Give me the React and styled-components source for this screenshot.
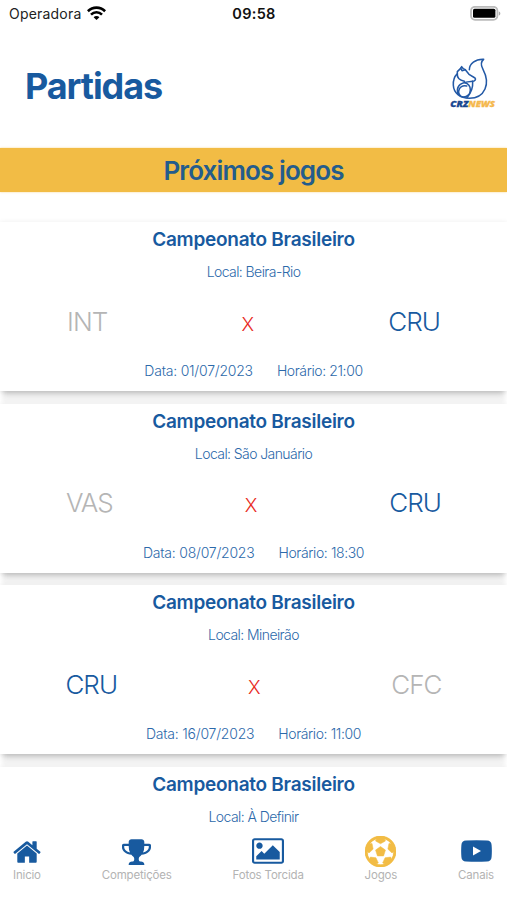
import styled, { createGlobalStyle } from "styled-components";

const blue = "#185a9f";
const gold = "#f2bc45";

const GlobalStyle = createGlobalStyle`
  * {
    box-sizing: border-box;
  }

  body {
    margin: 0;
    background: #fff;
    font-family: Inter, "Liberation Sans", sans-serif;
  }
`;

const Screen = styled.div`
  display: flex;
  flex-direction: column;
  height: 900px;
  overflow: hidden;
  background: #fff;
`;

const StatusBar = styled.div`
  display: grid;
  grid-template-columns: 1fr auto 1fr;
  align-items: center;
  height: 27px;
  padding: 0 5px 0 9px;
  color: #111;
`;

const Carrier = styled.div`
  display: flex;
  align-items: center;
  gap: 6px;
  font-size: 14px;
  letter-spacing: 0.2px;
  color: #222;
`;

const Clock = styled.span`
  margin-left: -3px;
  font-size: 14.5px;
  font-weight: 600;
  letter-spacing: 0.3px;
`;

const BatteryIcon = styled.svg`
  justify-self: end;
`;

const Header = styled.header`
  display: flex;
  justify-content: space-between;
  align-items: center;
  height: 121px;
  padding: 0 10px 3px 25px;
`;

const Title = styled.h1`
  margin: 0;
  font-size: 36px;
  line-height: 44px;
  font-weight: 700;
  letter-spacing: -1.1px;
  color: ${blue};
`;

const LogoMark = styled.svg`
  margin-bottom: 7px;
`;

const LogoText = styled.text`
  font-family: "Open Sans", sans-serif;
  font-size: 27px;
  font-weight: 800;
  font-style: italic;
`;

const Banner = styled.h2`
  flex: none;
  display: flex;
  justify-content: center;
  align-items: center;
  height: 44px;
  margin: 0 0 30px;
  background: ${gold};
  box-shadow: 0 0 2px rgba(242, 188, 69, 0.6);
  font-size: 26px;
  font-weight: 600;
  letter-spacing: -0.88px;
  color: #245c8c;
`;

const List = styled.main`
  flex: 1;
  display: flex;
  flex-direction: column;
  gap: 12.6px;
  min-height: 0;
  margin-top: -10px;
  padding-top: 10px;
  overflow: hidden;
`;

const Card = styled.article`
  flex: none;
  display: flex;
  flex-direction: column;
  align-items: center;
  height: 169px;
  padding-top: 5px;
  background: #fff;
  box-shadow:
    0 0 5px rgba(0, 0, 0, 0.07),
    0 5px 6px -3px rgba(0, 0, 0, 0.22),
    0 14px 4px -2px rgba(0, 0, 0, 0.05);
`;

const League = styled.h3`
  margin: 0;
  font-size: 19px;
  line-height: 26px;
  font-weight: 600;
  letter-spacing: -0.27px;
  color: ${blue};
`;

const Info = styled.span`
  font-size: 14px;
  line-height: 20px;
  font-weight: 300;
  letter-spacing: ${(p) => p.$spacing || "-0.58px"};
  color: #2c69aa;
`;

const Place = styled.div`
  display: flex;
  margin-top: 9px;
`;

const Teams = styled.div`
  display: flex;
  justify-content: space-around;
  align-items: center;
  width: 100%;
  height: 32px;
  margin-top: 23px;
`;

const Team = styled.span`
  font-size: 26px;
  font-weight: 300;
  letter-spacing: -0.95px;
  color: ${(p) => (p.$home ? blue : "#b5b5b5")};
`;

const Versus = styled.span`
  padding-top: 6px;
  font-size: 19px;
  font-weight: 300;
  color: #e8291c;
`;

const When = styled.div`
  display: flex;
  gap: 24px;
  margin-top: 24px;
`;

const TabBar = styled.nav`
  flex: none;
  display: flex;
  justify-content: space-between;
  height: 70px;
  padding: 4px 13px 0 13px;
  background: #fff;
`;

const Tab = styled.div`
  display: flex;
  flex-direction: column;
  align-items: center;
  color: ${(p) => (p.$active ? gold : blue)};
`;

const TabIcon = styled.div`
  display: flex;
  justify-content: center;
  align-items: center;
  height: 34px;
  margin: 0 -4px;
`;

const TabLabel = styled.span`
  font-size: 11.5px;
  line-height: 14px;
  letter-spacing: -0.18px;
  color: #b3b3b3;
`;

const Logo = () => (
  <LogoMark width="47" height="52" viewBox="0 0 141 156">
    <g fill="none" stroke="#2359a6" strokeWidth="4.6" strokeLinecap="round" strokeLinejoin="round">
      <path d="M58 38C58 20 76 6 101 7C92 14 93 26 99 37C110 58 113 78 105 96C97 114 80 124 58 124C30 124 11 108 10 85C9 71 14 58 22 50L22 44L32 34L35 29L40 35L46 38L57 52L75 63C79 67 74 73 67 73C54 74 42 74 31 82C20 90 19 107 30 115" />
      <path d="M22 50C21 61 29 70 43 73" />
      <path d="M32 34L36 41L46 38" />
      <path d="M44 77C54 79 61 88 61 99C61 112 51 120 41 120C30 120 25 111 26 102C28 90 38 84 50 87" />
      <path d="M68 73C69 87 63 108 51 122" />
    </g>
    <LogoText x="1" y="151" fill="#17468f" stroke="#17468f" textLength="54" lengthAdjust="spacingAndGlyphs">CRZ</LogoText>
    <LogoText x="55" y="151" fill="#f5b84c" stroke="#f5b84c" textLength="80" lengthAdjust="spacingAndGlyphs">NEWS</LogoText>
  </LogoMark>
);

const Wifi = () => (
  <svg width="19" height="15" viewBox="0 0 19 15" fill="none" stroke="#000" strokeWidth="2.6">
    <path d="M0.9 5.2C5.8 0.4 13.2 0.4 18.1 5.2" />
    <path d="M4 8.6C7.1 5.5 11.9 5.5 15 8.6" />
    <path d="M9.5 14L6.6 11.2C8.2 9.7 10.8 9.7 12.4 11.2Z" fill="#000" stroke="none" />
  </svg>
);

const Battery = () => (
  <BatteryIcon width="32" height="15" viewBox="0 0 32 15">
    <rect x="1" y="0.8" width="26.4" height="13" rx="4" fill="#fff" stroke="#bbb" strokeWidth="1.8" />
    <rect x="3" y="2.8" width="22.4" height="9" rx="1.5" fill="#000" />
    <path d="M28.8 5.4C30.8 6 30.8 8.8 28.8 9.4Z" fill="#aaa" />
  </BatteryIcon>
);

const HomeIcon = () => (
  <svg width="28" height="28" viewBox="0 0 1664 1664" fill="currentColor">
    <path d="M1408 992v480q0 26-19 45t-45 19h-384v-384h-256v384h-384q-26 0-45-19t-19-45v-480q0-1 .5-3t.5-3l575-474 575 474q1 2 1 6zm223-69l-62 74q-8 9-21 11h-3q-13 0-21-7l-692-577-692 577q-12 8-24 7-13-2-21-11l-62-74q-8-10-7-23.5t11-21.5l719-599q32-26 76-26t76 26l244 204v-195q0-14 9-23t23-9h192q14 0 23 9t9 23v408l219 182q10 8 11 21.5t-7 23.5z" />
  </svg>
);

const TrophyIcon = () => (
  <svg width="29" height="27" viewBox="0 0 1664 1536" fill="currentColor">
    <path d="M458 832q-74-162-74-384h-256v96q0 78 94.5 162t235.5 126zm1078-288v-96h-256q0 222-74 384 141-42 235.5-126t94.5-162zm128-128v128q0 71-41.5 143t-112 130-173 97.5-215.5 44.5q-42 54-95 95-38 34-52.5 72.5t-14.5 89.5q0 54 30.5 91t97.5 37q75 0 133.5 45.5t58.5 114.5v64q0 14-9 23t-23 9h-832q-14 0-23-9t-9-23v-64q0-69 58.5-114.5t133.5-45.5q67 0 97.5-37t30.5-91q0-51-14.5-89.5t-52.5-72.5q-53-41-95-95-113-5-215.5-44.5t-173-97.5-112-130-41.5-143v-128q0-40 28-68t68-28h288v-96q0-66 47-113t113-47h576q66 0 113 47t47 113v96h288q40 0 68 28t28 68z" />
  </svg>
);

const PictureIcon = () => (
  <svg width="32" height="26" viewBox="0 0 1920 1536" fill="currentColor">
    <path d="M640 448q0 80-56 136t-136 56-136-56-56-136 56-136 136-56 136 56 56 136zm1024 384v448h-1408v-192l320-320 160 160 512-512zm96-704h-1600q-13 0-22.5 9.5t-9.5 22.5v1216q0 13 9.5 22.5t22.5 9.5h1600q13 0 22.5-9.5t9.5-22.5v-1216q0-13-9.5-22.5t-22.5-9.5zm160 32v1216q0 66-47 113t-113 47h-1600q-66 0-113-47t-47-113v-1216q0-66 47-113t113-47h1600q66 0 113 47t47 113z" />
  </svg>
);

const BallIcon = () => (
  <svg width="31" height="31" viewBox="0 0 1792 1792" fill="currentColor">
    <circle cx="896" cy="896" r="830" fill="none" stroke="currentColor" strokeWidth="125" />
    <path
      stroke="currentColor"
      strokeWidth="30"
      d="M609 816l287-208 287 208-109 336h-355zm287-816q182 0 348 71t286 191 191 286 71 348-71 348-191 286-286 191-348 71-348-71-286-191-191-286-71-348 71-348 191-286 286-191 348-71zm619 1350q149-203 149-454v-3l-102 89-240-224 63-323 134 12q-150-206-389-282l53 124-287 159-287-159 53-124q-239 76-389 282l135-12 62 323-240 224-102-89v3q0 251 149 454l30-132 326 40 139 298-116 69q117 39 240 39t240-39l-116-69 139-298 326-40z"
    />
  </svg>
);

const VideoIcon = () => (
  <svg width="31" height="22" viewBox="0 0 31 22">
    <path d="M5 0.5Q15.5-0.2 26 0.5Q30.3 0.7 30.6 5Q31.1 11 30.6 17Q30.3 21.3 26 21.5Q15.5 22.2 5 21.5Q0.7 21.3 0.4 17Q-0.1 11 0.4 5Q0.7 0.7 5 0.5Z" fill="currentColor" />
    <path d="M12 6.5L20 11L12 15.5Z" fill="#fff" />
  </svg>
);

const matches = [
  { place: "Beira-Rio", teams: ["INT", "CRU"], date: "01/07/2023", time: "21:00" },
  { place: "São Januário", teams: ["VAS", "CRU"], date: "08/07/2023", time: "18:30" },
  { place: "Mineirão", teams: ["CRU", "CFC"], date: "16/07/2023", time: "11:00" },
  { place: "À Definir" },
];

const tabs = [
  { label: "Inicio", icon: <HomeIcon /> },
  { label: "Competições", icon: <TrophyIcon /> },
  { label: "Fotos Torcida", icon: <PictureIcon /> },
  { label: "Jogos", icon: <BallIcon />, active: true },
  { label: "Canais", icon: <VideoIcon /> },
];

const Match = ({ match }) => (
  <Card>
    <League>Campeonato Brasileiro</League>
    <Place>
      <Info>Local: {match.place}</Info>
    </Place>
    {match.teams && (
      <>
        <Teams>
          <Team $home={match.teams[0] === "CRU"}>{match.teams[0]}</Team>
          <Versus>X</Versus>
          <Team $home={match.teams[1] === "CRU"}>{match.teams[1]}</Team>
        </Teams>
        <When>
          <Info $spacing="-0.22px">Data: {match.date}</Info>
          <Info $spacing="-0.4px">Horário: {match.time}</Info>
        </When>
      </>
    )}
  </Card>
);

const App = () => {
  return (
    <Screen>
      <GlobalStyle />
      <StatusBar>
        <Carrier>
          Operadora
          <Wifi />
        </Carrier>
        <Clock>09:58</Clock>
        <Battery />
      </StatusBar>
      <Header>
        <Title>Partidas</Title>
        <Logo />
      </Header>
      <Banner>Próximos jogos</Banner>
      <List>
        {matches.map((match) => (
          <Match key={match.place} match={match} />
        ))}
      </List>
      <TabBar>
        {tabs.map((tab) => (
          <Tab key={tab.label} $active={tab.active}>
            <TabIcon>{tab.icon}</TabIcon>
            <TabLabel>{tab.label}</TabLabel>
          </Tab>
        ))}
      </TabBar>
    </Screen>
  );
};

export default App;
